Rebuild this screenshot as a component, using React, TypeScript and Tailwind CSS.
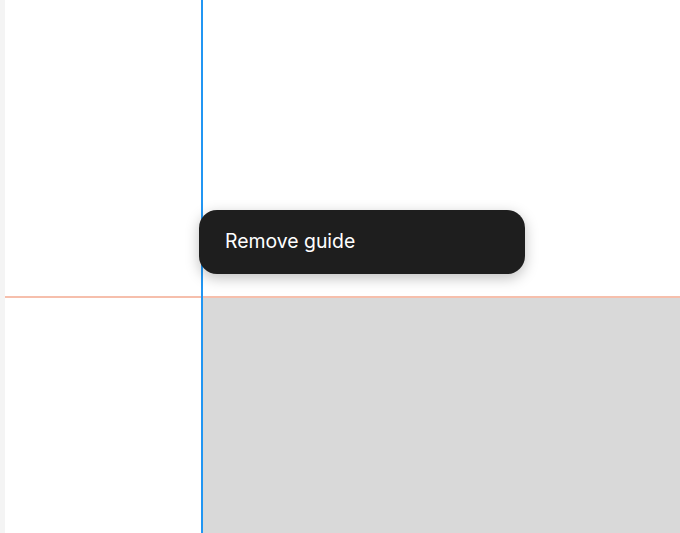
export default function App() {
  return (
    <div className="relative flex h-[533px] w-[680px] overflow-hidden bg-white" style={{ fontFamily: 'Inter, "Noto Sans", sans-serif' }}>
      <div className="w-[5px] shrink-0 bg-[#f4f4f4]" />
      <div className="flex flex-1 flex-col">
        <div className="flex h-[296px] shrink-0">
          <div className="w-[196px] bg-white" />
          <div className="w-[2px] bg-[#2196f3]" />
          <div className="flex-1 bg-white" />
        </div>
        <div className="flex h-[2px] shrink-0">
          <div className="w-[196px] bg-[#f6bfac]" />
          <div className="w-[2px] bg-[#2196f3]" />
          <div className="flex-1 bg-[#f6bfac]" />
        </div>
        <div className="flex flex-1">
          <div className="w-[196px] bg-white" />
          <div className="w-[2px] bg-[#2196f3]" />
          <div className="flex-1 bg-[#d9d9d9]" />
        </div>
      </div>
      <div className="absolute left-[199px] top-[210px] flex h-[64px] w-[326px] items-center rounded-[18px] bg-[#1e1e1e] pl-[26px] shadow-[0_4px_14px_rgba(0,0,0,0.25)]">
        <span className="text-[19.4px] leading-none text-white">Remove guide</span>
      </div>
    </div>
  );
}
